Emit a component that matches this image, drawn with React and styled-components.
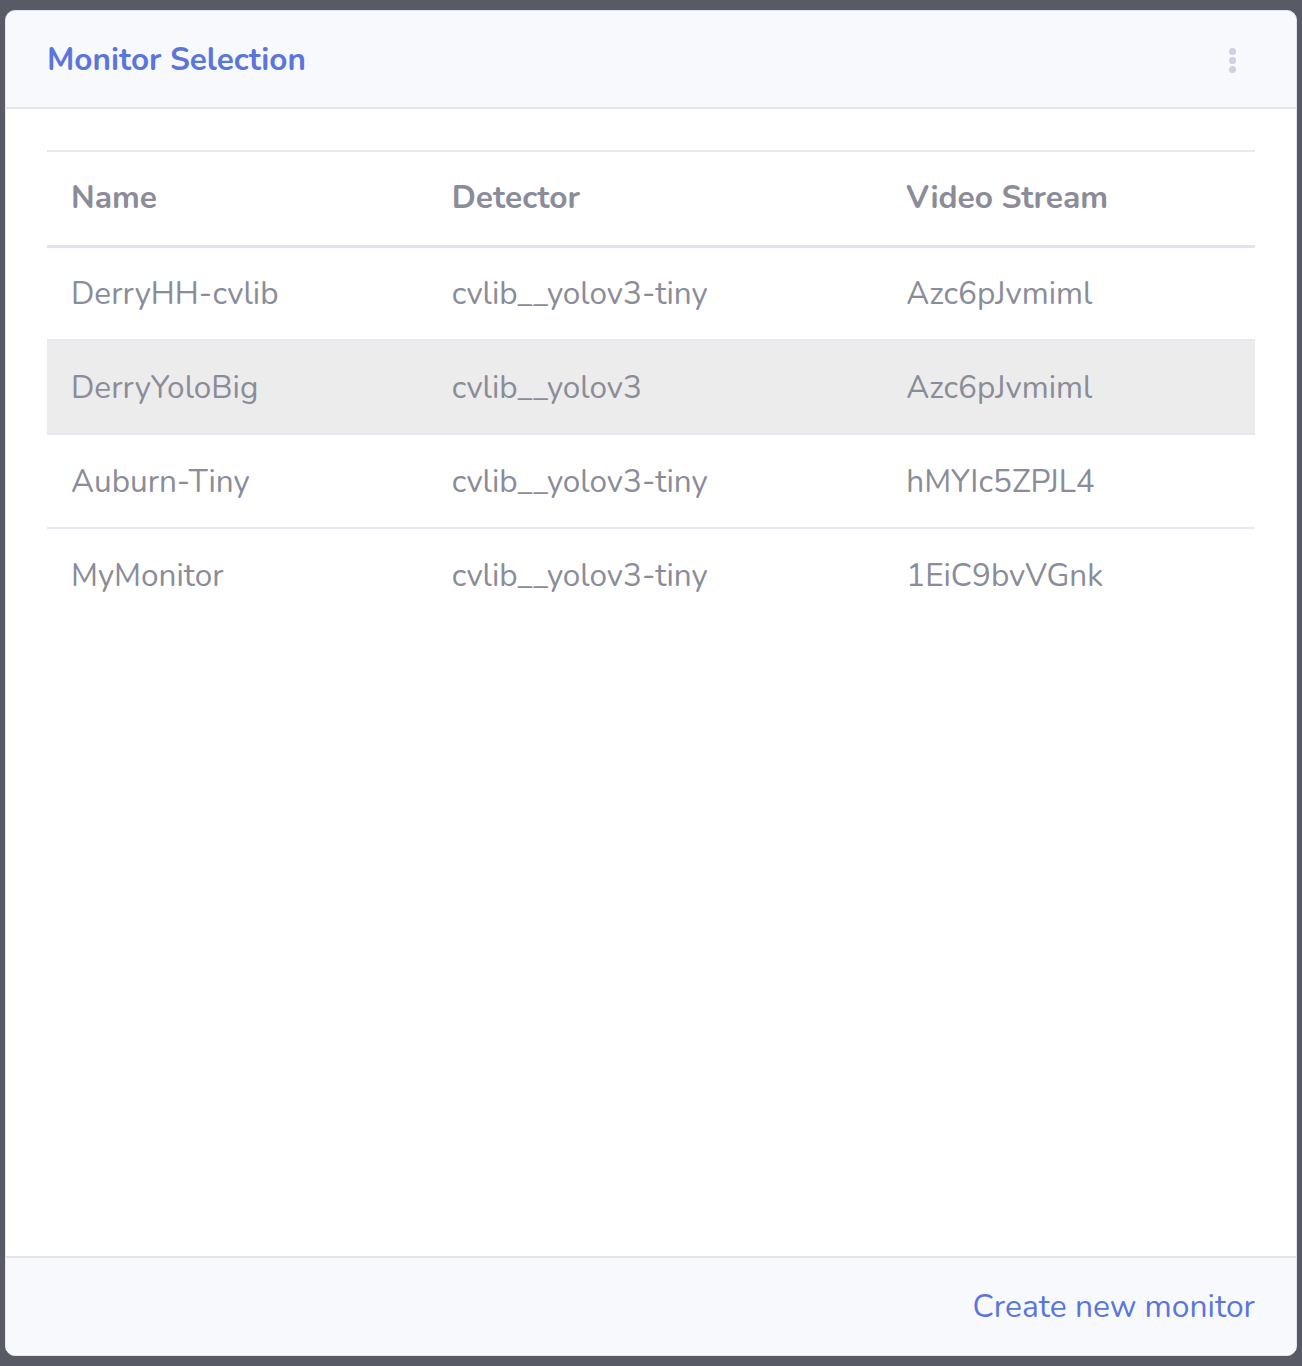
import React from "react";
import styled, { createGlobalStyle } from "styled-components";

const Global = createGlobalStyle`
  html, body { margin: 0; padding: 0; background: #585a66; }
  body { font-family: "Nunito", "Lato", "Noto Sans", sans-serif; }
  * { box-sizing: border-box; }
`;

const Page = styled.div`
  padding: 10px 5px 10px 5px;
  height: 1366px;
  display: flex;
`;

const Card = styled.div`
  flex: 1;
  display: flex;
  flex-direction: column;
  background: #fff;
  border: 1px solid #e3e4ee;
  border-radius: 10px;
  overflow: hidden;
`;

const Header = styled.div`
  height: 98px;
  flex: none;
  display: flex;
  align-items: center;
  justify-content: space-between;
  padding: 0 60px 0 41px;
  background: #f8f9fc;
  border-bottom: 2px solid #e3e4ee;
`;

const Title = styled.h2`
  margin: 0;
  font-size: 31.5px;
  font-weight: 700;
  color: #5a76dc;
`;

const Kebab = styled.div`
  display: flex;
  flex-direction: column;
  gap: 2px;
  margin-top: 2px;
`;

const Dot = styled.span`
  width: 7px;
  height: 7px;
  border-radius: 50%;
  background: #d0d1de;
`;

const Body = styled.div`
  flex: 1;
  padding: 41px 41px 0 41px;
`;

const Table = styled.table`
  width: 100%;
  border-collapse: collapse;
  border-top: 2px solid #e8e9f0;
`;

const HeadCell = styled.th`
  text-align: left;
  height: 95px;
  padding: 0 24px 1px 24px;
  font-size: 31.7px;
  font-weight: 700;
  color: #8a8c99;
  border-bottom: 3px solid #e3e4ee;
  width: ${(p) => p.$w}px;
`;

const Row = styled.tr`
  background: ${(p) => (p.$active ? "#ececec" : "transparent")};
  border-bottom: ${(p) => (p.$last ? "none" : "2px solid #e8e9f0")};
`;

const Cell = styled.td`
  height: 94px;
  padding: 0 24px;
  font-size: 31.5px;
  color: #8a8c99;
`;

const Footer = styled.div`
  height: 99px;
  flex: none;
  display: flex;
  align-items: center;
  justify-content: flex-end;
  padding: 0 41px 0 41px;
  background: #f8f9fc;
  border-top: 2px solid #e3e4ee;
`;

const LinkButton = styled.a`
  font-size: 31.8px;
  color: #5a76dc;
  text-decoration: none;
  cursor: pointer;
`;

const rows = [
  ["DerryHH-cvlib", "cvlib__yolov3-tiny", "Azc6pJvmiml"],
  ["DerryYoloBig", "cvlib__yolov3", "Azc6pJvmiml"],
  ["Auburn-Tiny", "cvlib__yolov3-tiny", "hMYIc5ZPJL4"],
  ["MyMonitor", "cvlib__yolov3-tiny", "1EiC9bvVGnk"],
];

export default function App() {
  return (
    <>
      <Global />
      <Page>
        <Card>
          <Header>
            <Title>Monitor Selection</Title>
            <Kebab>
              <Dot />
              <Dot />
              <Dot />
            </Kebab>
          </Header>
          <Body>
            <Table>
              <thead>
                <tr>
                  <HeadCell $w={381}>Name</HeadCell>
                  <HeadCell $w={455}>Detector</HeadCell>
                  <HeadCell $w={373}>Video Stream</HeadCell>
                </tr>
              </thead>
              <tbody>
                {rows.map((r, i) => (
                  <Row key={i} $active={i === 1} $last={i === rows.length - 1}>
                    <Cell>{r[0]}</Cell>
                    <Cell>{r[1]}</Cell>
                    <Cell>{r[2]}</Cell>
                  </Row>
                ))}
              </tbody>
            </Table>
          </Body>
          <Footer>
            <LinkButton>Create new monitor</LinkButton>
          </Footer>
        </Card>
      </Page>
    </>
  );
}
